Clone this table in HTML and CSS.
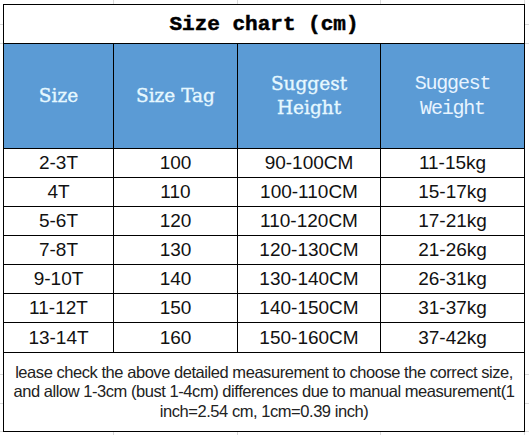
FILE: index.html
```html
<!DOCTYPE html>
<html>
<head>
<meta charset="utf-8">
<link rel="stylesheet" href="styles.css">
</head>
<body>
<div class="sheet">
  <table class="chart">
    <colgroup>
      <col class="c1"><col class="c2"><col class="c3"><col class="c4">
    </colgroup>
    <tr class="title-row"><td colspan="4" class="title">Size chart (cm)</td></tr>
    <tr class="head-row">
      <td class="head">Size</td>
      <td class="head">Size Tag</td>
      <td class="head">Suggest<br>Height</td>
      <td class="head mono">Suggest<br>Weight</td>
    </tr>
    <tr class="row"><td>2-3T</td><td>100</td><td>90-100CM</td><td>11-15kg</td></tr>
    <tr class="row"><td>4T</td><td>110</td><td>100-110CM</td><td>15-17kg</td></tr>
    <tr class="row"><td>5-6T</td><td>120</td><td>110-120CM</td><td>17-21kg</td></tr>
    <tr class="row"><td>7-8T</td><td>130</td><td>120-130CM</td><td>21-26kg</td></tr>
    <tr class="row"><td>9-10T</td><td>140</td><td>130-140CM</td><td>26-31kg</td></tr>
    <tr class="row"><td>11-12T</td><td>150</td><td>140-150CM</td><td>31-37kg</td></tr>
    <tr class="row last"><td>13-14T</td><td>160</td><td>150-160CM</td><td>37-42kg</td></tr>
    <tr class="note-row"><td colspan="4" class="note">lease check the above detailed measurement to choose the correct size,<br>and allow 1-3cm (bust 1-4cm) differences due to manual measurement(1<br>inch=2.54 cm, 1cm=0.39 inch)</td></tr>
  </table>
</div>
</body>
</html>
```
FILE: styles.css
```css
html, body {
  margin: 0;
  padding: 0;
  width: 529px;
  height: 435px;
  overflow: hidden;
  background-color: #fff;
}
body {
  background-image:
    linear-gradient(to right, transparent 113px, #dadada 113px, #dadada 114px, transparent 114px),
    linear-gradient(to right, transparent 237px, #dadada 237px, #dadada 238px, transparent 238px),
    linear-gradient(to right, transparent 380px, #dadada 380px, #dadada 381px, transparent 381px),
    linear-gradient(to right, transparent 524px, #dadada 524px, #dadada 525px, transparent 525px),
    linear-gradient(to bottom, transparent 24px, #dadada 24px, #dadada 25px, transparent 25px),
    linear-gradient(to bottom, transparent 43px, #dadada 43px, #dadada 44px, transparent 44px),
    linear-gradient(to bottom, transparent 374px, #dadada 374px, #dadada 375px, transparent 375px),
    linear-gradient(to bottom, transparent 403px, #dadada 403px, #dadada 404px, transparent 404px),
    linear-gradient(to bottom, transparent 431px, #dadada 431px, #dadada 432px, transparent 432px);
}
.sheet {
  padding: 4px 0 0 3px;
}
.chart {
  border-collapse: collapse;
  table-layout: fixed;
  width: 522px;
  background: #fff;
}
.c1 { width: 110px; }
.c2 { width: 124px; }
.c3 { width: 143px; }
.c4 { width: 144px; }
.chart td {
  border: 1px solid #000;
  padding: 0;
  text-align: center;
  vertical-align: middle;
}
.title-row { height: 39px; }
.title {
  font-family: "Liberation Mono", monospace;
  font-weight: bold;
  font-size: 21px;
  padding-top: 2px;
  color: #000;
  -webkit-text-stroke: 0.5px #000;
}
.head-row { height: 105px; }
.head {
  background: #5b9bd5;
  color: #e6f8ff;
  font-family: "DejaVu Serif", serif;
  font-size: 18.5px;
  line-height: 24px;
  -webkit-text-stroke: 0.35px #e6f8ff;
}
.head.mono {
  font-family: "Liberation Mono", monospace;
  font-size: 20px;
  letter-spacing: -1.2px;
  line-height: 25px;
  color: #e8f4ff;
  -webkit-text-stroke: 0;
}
.row { height: 29px; }
.row.last { height: 30px; }
.row td {
  font-family: "Liberation Sans", Arial, sans-serif;
  font-size: 19px;
  color: #111;
}
.note-row { height: 79px; }
.note {
  font-family: "Liberation Sans", Arial, sans-serif;
  font-size: 16.5px;
  letter-spacing: -0.45px;
  line-height: 19.3px;
  white-space: nowrap;
  color: #222;
}
```
